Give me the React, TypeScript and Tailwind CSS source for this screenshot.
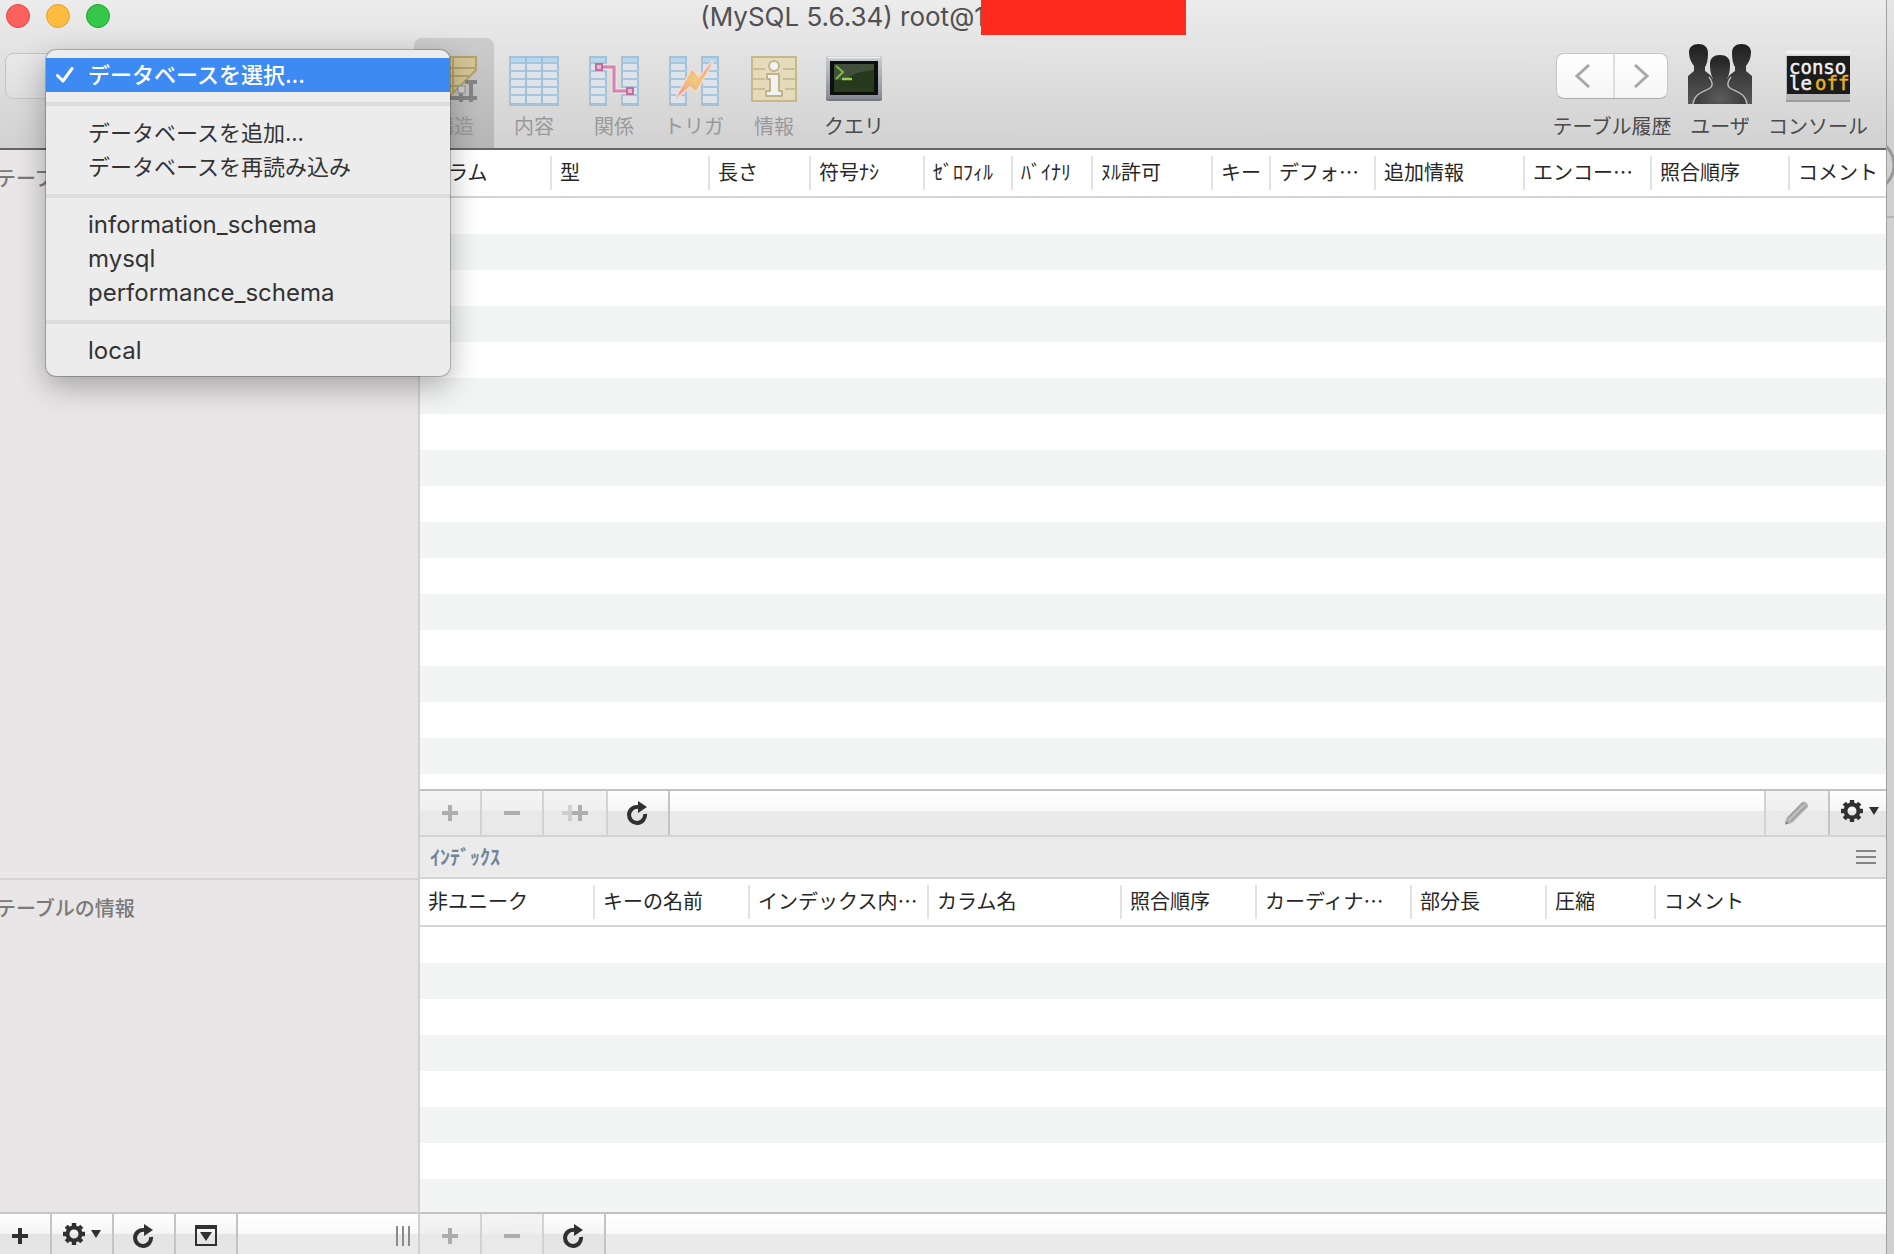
import React from 'react';

type Column = { label: string; width: string };

const structureColumns: Column[] = [
  { label: 'カラム', width: 'w-[132px]' },
  { label: '型', width: 'w-[158px]' },
  { label: '長さ', width: 'w-[101px]' },
  { label: '符号ﾅｼ', width: 'w-[114px]' },
  { label: 'ｾﾞﾛﾌｨﾙ', width: 'w-[88px]' },
  { label: 'ﾊﾞｲﾅﾘ', width: 'w-[80px]' },
  { label: 'ﾇﾙ許可', width: 'w-[120px]' },
  { label: 'キー', width: 'w-[58px]' },
  { label: 'デフォ…', width: 'w-[105px]' },
  { label: '追加情報', width: 'w-[149px]' },
  { label: 'エンコー…', width: 'w-[127px]' },
  { label: '照合順序', width: 'w-[138px]' },
  { label: 'コメント', width: 'w-auto' },
];

const indexColumns: Column[] = [
  { label: '非ユニーク', width: 'w-[175px]' },
  { label: 'キーの名前', width: 'w-[155px]' },
  { label: 'インデックス内…', width: 'w-[179px]' },
  { label: 'カラム名', width: 'w-[193px]' },
  { label: '照合順序', width: 'w-[135px]' },
  { label: 'カーディナ…', width: 'w-[155px]' },
  { label: '部分長', width: 'w-[135px]' },
  { label: '圧縮', width: 'w-[109px]' },
  { label: 'コメント', width: 'w-auto' },
];

const menuGroups = [
  { items: ['データベースを選択...'], style: 'bg-[#3d8bf2] text-[22px] font-medium text-white' },
  { items: ['データベースを追加...', 'データベースを再読み込み'], style: 'text-[22px]' },
  { items: ['information_schema', 'mysql', 'performance_schema'], style: 'text-2xl leading-[34px]' },
  { items: ['local'], style: 'text-2xl leading-[34px]' },
];

/* ---------- icons ---------- */

const GridRows = ({ x, width }: { x: number; width: number }) => (
  <g>
    <rect x={x - 1} y="2" width={width + 2} height="48" fill="#000000" opacity="0.14" />
    <rect x={x} y="1" width={width} height="47" fill="#dde3ea" stroke="#a3c2da" strokeWidth="2" />
    <rect x={x + 1} y="2" width={width - 2} height="4" fill="#b7d6f1" />
    {[6, 14, 22, 30, 38].map((y) => (
      <rect key={y} x={x} y={y} width={width} height="2" fill="#a9c6dc" />
    ))}
  </g>
);

const StructureIcon = () => (
  <svg width="50" height="50" viewBox="0 0 50 50">
    <path d="M1 1h46v13L19 42H1z" fill="#d3c594" stroke="#b3a26c" strokeWidth="2" />
    <path d="M1 12h46M1 20h39M1 30h30M24 1v36" stroke="#b3a26c" strokeWidth="2" fill="none" />
    <g fill="none" stroke="#858585" strokeWidth="4">
      <path d="M17 42h31M36 26h12M32 32v14M42 24v22" />
    </g>
    <rect x="29" y="30" width="7" height="7" fill="#cfcfcf" stroke="#8f8f8f" />
  </svg>
);

const ContentIcon = () => (
  <svg width="52" height="51" viewBox="0 0 52 51">
    <GridRows x={2} width={48} />
    <path d="M18 1v47M34 1v47" stroke="#9fbfd8" strokeWidth="2" />
  </svg>
);

const RelationIcon = () => (
  <svg width="52" height="51" viewBox="0 0 52 51">
    <GridRows x={2} width={16} />
    <GridRows x={34} width={16} />
    <path d="M12 11h14v24h14" fill="none" stroke="#ecdfe6" strokeWidth="6" />
    <path d="M12 11h14v24h14" fill="none" stroke="#cf86ac" strokeWidth="3" />
    <rect x="8" y="8" width="6" height="6" fill="#e7b9d0" stroke="#c06f9c" strokeWidth="2" />
    <rect x="39" y="32" width="6" height="6" fill="#e7b9d0" stroke="#c06f9c" strokeWidth="2" />
  </svg>
);

const TriggerIcon = () => (
  <svg width="52" height="51" viewBox="0 0 52 51">
    <defs>
      <radialGradient id="bolt">
        <stop offset="0" stopColor="#f0cf7a" />
        <stop offset="1" stopColor="#f0a18a" />
      </radialGradient>
    </defs>
    <GridRows x={2} width={16} />
    <GridRows x={34} width={16} />
    <path d="M45 5L31 22L24 14L8 42L22 30L28 35Z" fill="url(#bolt)" stroke="#f2dccf" strokeWidth="3" />
    <path d="M45 5L31 22L24 14L8 42L22 30L28 35Z" fill="url(#bolt)" />
  </svg>
);

const InfoIcon = () => (
  <svg width="48" height="50" viewBox="0 0 48 50">
    <rect x="2" y="1" width="44" height="44" fill="#e5dbbb" stroke="#c5b98c" strokeWidth="2" />
    <path d="M3 13h12M33 13h12M3 23h12M33 23h12M3 33h12M35 33h10" stroke="#c9be97" strokeWidth="2" />
    <circle cx="24" cy="10" r="5" fill="#f2f2f2" stroke="#bfb48c" strokeWidth="2" />
    <path d="M17 18h12v17h3v5H16v-5h4V23h-3z" fill="#f2f2f2" stroke="#bfb48c" strokeWidth="2" strokeLinejoin="round" />
  </svg>
);

const QueryIcon = () => (
  <svg width="58" height="50" viewBox="0 0 58 50">
    <defs>
      <linearGradient id="bezel" x1="0" y1="0" x2="0" y2="1">
        <stop offset="0" stopColor="#c9cbd1" />
        <stop offset="1" stopColor="#878b96" />
      </linearGradient>
    </defs>
    <rect x="1" y="2" width="56" height="43" rx="2" fill="#77797f" />
    <rect x="1" y="0" width="56" height="43" rx="2" fill="url(#bezel)" />
    <path d="M3 1.500h52" stroke="#f1f1f3" strokeWidth="1.500" />
    <rect x="5" y="5" width="48" height="34" fill="#0d0f0d" />
    <rect x="9" y="8" width="40" height="28" fill="#273a1d" />
    <path d="M9 8h40v6C36 15 26 18 20 24H9z" fill="#41503b" />
    <path d="M11 10l7 6-7 7" fill="none" stroke="#79bf3f" strokeWidth="2" />
    <path d="M17 23h10" stroke="#8ed24e" strokeWidth="2.500" />
  </svg>
);

const UsersIcon = () => (
  <svg width="64" height="60" viewBox="0 0 64 60">
    <defs>
      <linearGradient id="back" x1="0" y1="0" x2="0" y2="1">
        <stop offset="0" stopColor="#1f1f1f" />
        <stop offset="1" stopColor="#575757" />
      </linearGradient>
      <radialGradient id="front" cx="0.5" cy="0.9" r="0.8">
        <stop offset="0" stopColor="#5c5c5c" />
        <stop offset="1" stopColor="#272727" />
      </radialGradient>
    </defs>
    <path d="M1 8C1 3 5 0 10.500 0S20 3 20 9c0 6-1 11-3 14v4c4 3 8 5 9 12v21H0V32l6-5v-5C3 18 1 14 1 8z" fill="url(#back)" />
    <path d="M63 8c0-5-4-8-9.500-8S44 3 44 9c0 6 1 11 3 14v4c-4 3-8 5-9 12v21h26V32l-6-5v-5c3-4 5-8 5-14z" fill="url(#back)" />
    <path
      d="M22 20c0-6 4-9 10-9s10 3 10 9c0 7-1 11-3 15v4c2 5 15 6 18 12l1 9H6l1-9c3-6 16-7 18-12v-4c-2-4-3-8-3-15z"
      fill="url(#front)"
    />
    <path d="M21 33c4 5 4 9 1 11-6 4-15 4-17 16M43 33c-4 5-4 9-1 11 6 4 15 4 17 16" fill="none" stroke="#b8b8b8" strokeWidth="1.500" />
  </svg>
);

const ConsoleIcon = () => (
  <svg width="64" height="54" viewBox="0 0 64 54">
    <defs>
      <linearGradient id="caseTop" x1="0" y1="0" x2="0" y2="1">
        <stop offset="0" stopColor="#dedede" />
        <stop offset="0.6" stopColor="#f5f5f5" />
        <stop offset="1" stopColor="#cfcfcf" />
      </linearGradient>
    </defs>
    <rect width="64" height="54" fill="#b8b8b8" />
    <rect width="64" height="8" fill="url(#caseTop)" />
    <rect x="1" y="8" width="63" height="38" fill="#1b1b1b" />
    <rect y="52" width="64" height="2" fill="#9c9c9c" />
    <g fontFamily="DejaVu Sans Mono, monospace" fontSize="19">
      <text x="3" y="26" fill="#f1f1f1" stroke="#f1f1f1" strokeWidth="0.5">conso</text>
      <text x="3" y="42" fill="#f1f1f1" stroke="#f1f1f1" strokeWidth="0.5">le</text>
      <text x="29" y="42" fill="#e5b420" stroke="#e5b420" strokeWidth="0.5">off</text>
    </g>
  </svg>
);

const PlusIcon = () => (
  <svg width="16" height="16" viewBox="0 0 16 16" fill="currentColor">
    <path d="M6 0h4v6h6v4h-6v6H6v-6H0V6h6z" />
  </svg>
);

const MinusIcon = () => (
  <svg width="16" height="16" viewBox="0 0 16 16" fill="currentColor">
    <path d="M0 6h16v4H0z" />
  </svg>
);

const DuplicateIcon = () => (
  <svg width="26" height="16" viewBox="0 0 26 16" fill="currentColor">
    <path d="M6 0h4v16H6v-6H0V6h6z" opacity="0.45" />
    <path d="M16 0h4v6h6v4h-6v6h-4v-6h-6V6h6z" />
  </svg>
);

const RefreshIcon = () => (
  <svg width="22" height="24" viewBox="0 0 22 24">
    <path d="M18 13A8 8 0 1 1 11 6" fill="none" stroke="currentColor" strokeWidth="4" />
    <path d="M11 0l9 6-9 6z" fill="currentColor" />
  </svg>
);

const GearIcon = () => (
  <svg width="22" height="22" viewBox="0 0 22 22">
    <circle cx="11" cy="11" r="6.500" fill="none" stroke="currentColor" strokeWidth="4" />
    <g fill="currentColor">
      {[0, 45, 90, 135, 180, 225, 270, 315].map((angle) => (
        <rect key={angle} x="8.800" y="0" width="4.400" height="4" transform={`rotate(${angle} 11 11)`} />
      ))}
    </g>
  </svg>
);

const CaretIcon = () => (
  <svg width="10" height="8" viewBox="0 0 10 8" fill="currentColor">
    <path d="M0 0h10L5 8z" />
  </svg>
);

const PencilIcon = () => (
  <svg width="26" height="26" viewBox="0 0 26 26">
    <path d="M1 24.500L2.500 18 18 2c2-2 8 2 5.500 5.500L8 23z" fill="#b3b3b3" />
    <path d="M4 18L19 3M7 21L22 6" stroke="#9f9f9f" strokeWidth="1.500" />
    <path d="M5 20L20 5" stroke="#c4c4c4" strokeWidth="1.500" />
    <path d="M1 24.500l1-4 3 3z" fill="#8a8a8a" />
  </svg>
);

const PanelToggleIcon = () => (
  <svg width="22" height="22" viewBox="0 0 22 22">
    <path d="M0 0h22v21H0zM2 4v15h18V4z" fill="currentColor" fillRule="evenodd" />
    <path d="M5 7h12l-6 9z" fill="currentColor" />
  </svg>
);

/* ---------- building blocks ---------- */

const ToolbarItem = ({
  label,
  icon,
  selected,
  enabled,
}: {
  label: string;
  icon: React.ReactNode;
  selected?: boolean;
  enabled?: boolean;
}) => (
  <button
    className={`flex w-20 flex-col items-center rounded-t-lg pt-[18px] text-xl leading-8 ${
      selected ? 'bg-gradient-to-b from-[#cccccc] to-[#b6b6b6]' : ''
    } ${enabled ? 'text-[#4a4a4a]' : 'text-[#999999]'}`}
  >
    <span className="flex h-[54px] items-start">{icon}</span>
    {label}
  </button>
);

const barSurface = 'bg-[linear-gradient(#ffffff,#f9f9f9_20px,#eaeaea_20px,#eaeaea)]';

const BarButton = ({
  label,
  disabled,
  className = 'w-[62px] border-r-2',
  children,
}: {
  label: string;
  disabled?: boolean;
  className?: string;
  children: React.ReactNode;
}) => (
  <button
    aria-label={label}
    disabled={disabled}
    className={`flex h-full shrink-0 items-center justify-center ${className} ${
      disabled
        ? 'border-[#d2d2d2] bg-[linear-gradient(#f4f4f4,#efefef_20px,#e9e9e9_20px,#e9e9e9)] text-[#adadad]'
        : 'border-[#c4c4c4] bg-[linear-gradient(#ffffff,#f4f4f4_20px,#e4e4e4_20px,#e6e6e6)] text-[#303030]'
    }`}
  >
    {children}
  </button>
);

const DataTable = ({ columns, rows }: { columns: Column[]; rows: number }) => (
  <table className="w-full table-fixed border-separate border-spacing-0">
    <thead>
      <tr className="h-12">
        {columns.map((column, index) => (
          <th key={column.label} className={`border-b-2 border-[#d4d4d4] p-0 text-left font-normal ${column.width}`}>
            <span
              className={`block h-[34px] overflow-hidden pl-2 text-xl leading-8 whitespace-nowrap text-[#262626] ${
                index < columns.length - 1 ? 'border-r-2 border-[#e2e2e2]' : ''
              }`}
            >
              {column.label}
            </span>
          </th>
        ))}
      </tr>
    </thead>
    <tbody>
      {[...Array(rows)].map((_, index) => (
        <tr key={index} className="h-9 even:bg-[#f3f5f4]">
          <td colSpan={columns.length} className="p-0" />
        </tr>
      ))}
    </tbody>
  </table>
);

const DatabaseMenu = () => (
  <div
    role="menu"
    className="absolute -top-[3px] left-[41px] z-10 w-[404px] rounded-[10px] bg-[#ececec] py-2 font-[Inter,'Noto_Sans_CJK_JP',sans-serif] leading-[34px] text-[#333333] shadow-[0_0_0_1px_rgba(0,0,0,0.22),0_10px_30px_rgba(0,0,0,0.3)]"
  >
    {menuGroups.map((group, groupIndex) => (
      <React.Fragment key={group.items[0]}>
        {groupIndex > 0 && <hr className="my-2.5 h-1 border-0 bg-[#dcdcdc]" />}
        {group.items.map((item) => (
          <button
            key={item}
            role="menuitem"
            className={`flex h-[34px] w-full items-center whitespace-nowrap ${group.style}`}
          >
            <span className="w-[42px] shrink-0 pl-2.5">
              {groupIndex === 0 && (
                <svg width="18" height="16" viewBox="0 0 18 16">
                  <path d="M1.500 8.500L7 14L16 1.500" fill="none" stroke="#ffffff" strokeWidth="3" strokeLinecap="round" strokeLinejoin="round" />
                </svg>
              )}
            </span>
            {item}
          </button>
        ))}
      </React.Fragment>
    ))}
  </div>
);

const TitleBar = () => (
  <div className="grid h-[38px] grid-cols-[1fr_auto_1fr]">
    <div className="flex gap-4 pt-1 pl-1.5">
      <button aria-label="閉じる" className="size-6 rounded-full border border-[#e2463f] bg-[#fc615d]" />
      <button aria-label="しまう" className="size-6 rounded-full border border-[#dea034] bg-[#fdbc40]" />
      <button aria-label="拡大" className="size-6 rounded-full border border-[#1fa42f] bg-[#34c749]" />
    </div>
    <h1 className="flex font-[Inter,sans-serif] text-[26px] leading-[34px] text-[#505050]">
      (MySQL 5.6.34) root@1
      <span className="relative -ml-1 h-[35px] w-[205px] bg-[#fd2b1d]" />
    </h1>
  </div>
);

const Toolbar = () => (
  <div className="flex h-[110px] justify-between">
    <div className="flex">
      <div className="relative w-[414px] pt-[15px] pl-[5px]">
        <button
          aria-label="データベースを選択"
          aria-haspopup="menu"
          className="h-[46px] w-[380px] rounded-lg border border-[#c3c3c3] bg-gradient-to-b from-[#e9e9e9] to-[#dedede]"
        />
        <div className="absolute top-[15px] left-[5px]">
          <DatabaseMenu />
        </div>
      </div>
      <ToolbarItem label="構造" icon={<StructureIcon />} selected />
      <ToolbarItem label="内容" icon={<ContentIcon />} />
      <ToolbarItem label="関係" icon={<RelationIcon />} />
      <ToolbarItem label="トリガ" icon={<TriggerIcon />} />
      <ToolbarItem label="情報" icon={<InfoIcon />} />
      <ToolbarItem label="クエリ" icon={<QueryIcon />} enabled />
    </div>
    <div className="flex gap-4 pr-[18px] text-xl leading-8 whitespace-nowrap text-[#4a4a4a]">
      <div className="flex w-[120px] flex-col items-center">
        <div className="flex h-[72px] items-start pt-[15px]">
          <div className="flex h-[46px] w-28 rounded-lg border border-[#c6c6c6] border-b-[#aaaaaa] bg-gradient-to-b from-white to-[#f5f5f5] text-[#a9a9a9]">
            <button aria-label="戻る" className="flex w-[58px] items-center justify-center border-r-2 border-[#dedede] pr-1">
              <svg width="16" height="24" viewBox="0 0 16 24">
                <path d="M14 1L2 12L14 23" fill="none" stroke="currentColor" strokeWidth="3" />
              </svg>
            </button>
            <button aria-label="進む" className="flex flex-1 items-center justify-center">
              <svg width="16" height="24" viewBox="0 0 16 24">
                <path d="M2 1L14 12L2 23" fill="none" stroke="currentColor" strokeWidth="3" />
              </svg>
            </button>
          </div>
        </div>
        テーブル履歴
      </div>
      <button className="flex w-16 flex-col items-center">
        <span className="flex h-[72px] items-start pt-1.5">
          <UsersIcon />
        </span>
        ユーザ
      </button>
      <button className="flex w-[100px] flex-col items-center">
        <span className="flex h-[72px] items-start pt-2.5">
          <ConsoleIcon />
        </span>
        コンソール
      </button>
    </div>
  </div>
);

const Sidebar = () => (
  <aside className="flex w-[420px] shrink-0 flex-col overflow-hidden border-r-2 border-[#d0d0d0] bg-[#e8e6e7] text-xl font-medium text-[#7a7a7a]">
    <section className="flex-1 pt-3">
      <h2 className="-ml-1 leading-8">テーブル</h2>
    </section>
    <section className="h-[334px] border-t-2 border-[#d4d4d4] pt-3">
      <h2 className="-ml-1 leading-8">テーブルの情報</h2>
    </section>
    <div className={`flex h-[42px] border-t-2 border-[#c9c9c9] ${barSurface}`}>
      <BarButton label="テーブルを追加" className="w-[52px] border-r-2 pt-1 pr-2.5">
        <PlusIcon />
      </BarButton>
      <BarButton label="テーブル操作" className="w-[62px] gap-1.5 border-r-2">
        <GearIcon />
        <CaretIcon />
      </BarButton>
      <BarButton label="再読み込み" className="w-[62px] border-r-2 pt-1">
        <RefreshIcon />
      </BarButton>
      <BarButton label="情報の表示切替" className="w-[62px] border-r-2 pt-1">
        <PanelToggleIcon />
      </BarButton>
      <div className="flex flex-1 items-center justify-end gap-1 pt-1 pr-2">
        <span className="h-5 w-0.5 bg-[#8b8b8b]" />
        <span className="h-5 w-0.5 bg-[#8b8b8b]" />
        <span className="h-5 w-0.5 bg-[#8b8b8b]" />
      </div>
    </div>
  </aside>
);

const StructurePanel = () => (
  <section className="flex min-h-0 flex-1 flex-col">
    <div className="min-h-0 flex-1 overflow-hidden">
      <DataTable columns={structureColumns} rows={17} />
    </div>
    <div className={`flex h-12 shrink-0 border-t-2 border-b-2 border-t-[#c2c2c2] border-b-[#d4d4d4] ${barSurface}`}>
      <BarButton label="カラムを追加" disabled>
        <PlusIcon />
      </BarButton>
      <BarButton label="カラムを削除" disabled>
        <MinusIcon />
      </BarButton>
      <BarButton label="カラムを複製" disabled className="w-16 border-r-2">
        <DuplicateIcon />
      </BarButton>
      <BarButton label="再読み込み">
        <RefreshIcon />
      </BarButton>
      <div className="flex flex-1 justify-end">
        <BarButton label="編集" disabled className="w-16 border-l-2">
          <PencilIcon />
        </BarButton>
        <BarButton label="操作" className="w-[58px] gap-1.5 border-l-2 pb-1 pl-1">
          <GearIcon />
          <CaretIcon />
        </BarButton>
      </div>
    </div>
  </section>
);

const IndexPanel = () => (
  <section className="flex h-[417px] shrink-0 flex-col">
    <div className="flex h-[42px] shrink-0 items-center justify-between border-b-2 border-[#d4d4d4] bg-[#ebebeb] px-2.5">
      <h2 className="text-xl leading-8 font-bold text-[#6f8599]">ｲﾝﾃﾞｯｸｽ</h2>
      <button aria-label="パネルの高さ" className="flex flex-col gap-1">
        <span className="h-0.5 w-5 bg-[#858585]" />
        <span className="h-0.5 w-5 bg-[#858585]" />
        <span className="h-0.5 w-5 bg-[#858585]" />
      </button>
    </div>
    <div className="min-h-0 flex-1 overflow-hidden">
      <DataTable columns={indexColumns} rows={8} />
    </div>
    <div className={`flex h-[42px] shrink-0 border-t-2 border-[#c2c2c2] ${barSurface}`}>
      <BarButton label="インデックスを追加" disabled className="w-[62px] border-r-2 pt-1">
        <PlusIcon />
      </BarButton>
      <BarButton label="インデックスを削除" disabled className="w-[62px] border-r-2 pt-1">
        <MinusIcon />
      </BarButton>
      <BarButton label="再読み込み" className="w-[62px] border-r-2 pt-1">
        <RefreshIcon />
      </BarButton>
    </div>
  </section>
);

/* sliver of the window behind */
const BackWindow = () => (
  <div className="w-2 shrink-0 overflow-hidden border-l border-[#a0a0a0] bg-gradient-to-b from-[#e6e6e6] via-[#d0d0d0] via-10% to-[#cfcfcf]">
    <svg width="7" height="220" viewBox="0 0 7 220">
      <circle cx="-19" cy="165" r="26" fill="none" stroke="#979797" strokeWidth="3" />
      <path d="M0 217h7" stroke="#b5b5b5" strokeWidth="2" />
    </svg>
  </div>
);

const App: React.FC = () => {
  return (
    <div lang="ja" className="flex h-screen overflow-hidden bg-[#dcdcdc] font-['Noto_Sans_CJK_JP',sans-serif]">
      <div className="flex min-w-0 flex-1 flex-col bg-white">
        <header className="shrink-0 border-b-2 border-[#666666] bg-gradient-to-b from-[#ececec] to-[#d1d1d1]">
          <TitleBar />
          <Toolbar />
        </header>
        <div className="flex min-h-0 flex-1">
          <Sidebar />
          <main className="flex min-w-0 flex-1 flex-col">
            <StructurePanel />
            <IndexPanel />
          </main>
        </div>
      </div>
      <BackWindow />
    </div>
  );
};

export default App;
